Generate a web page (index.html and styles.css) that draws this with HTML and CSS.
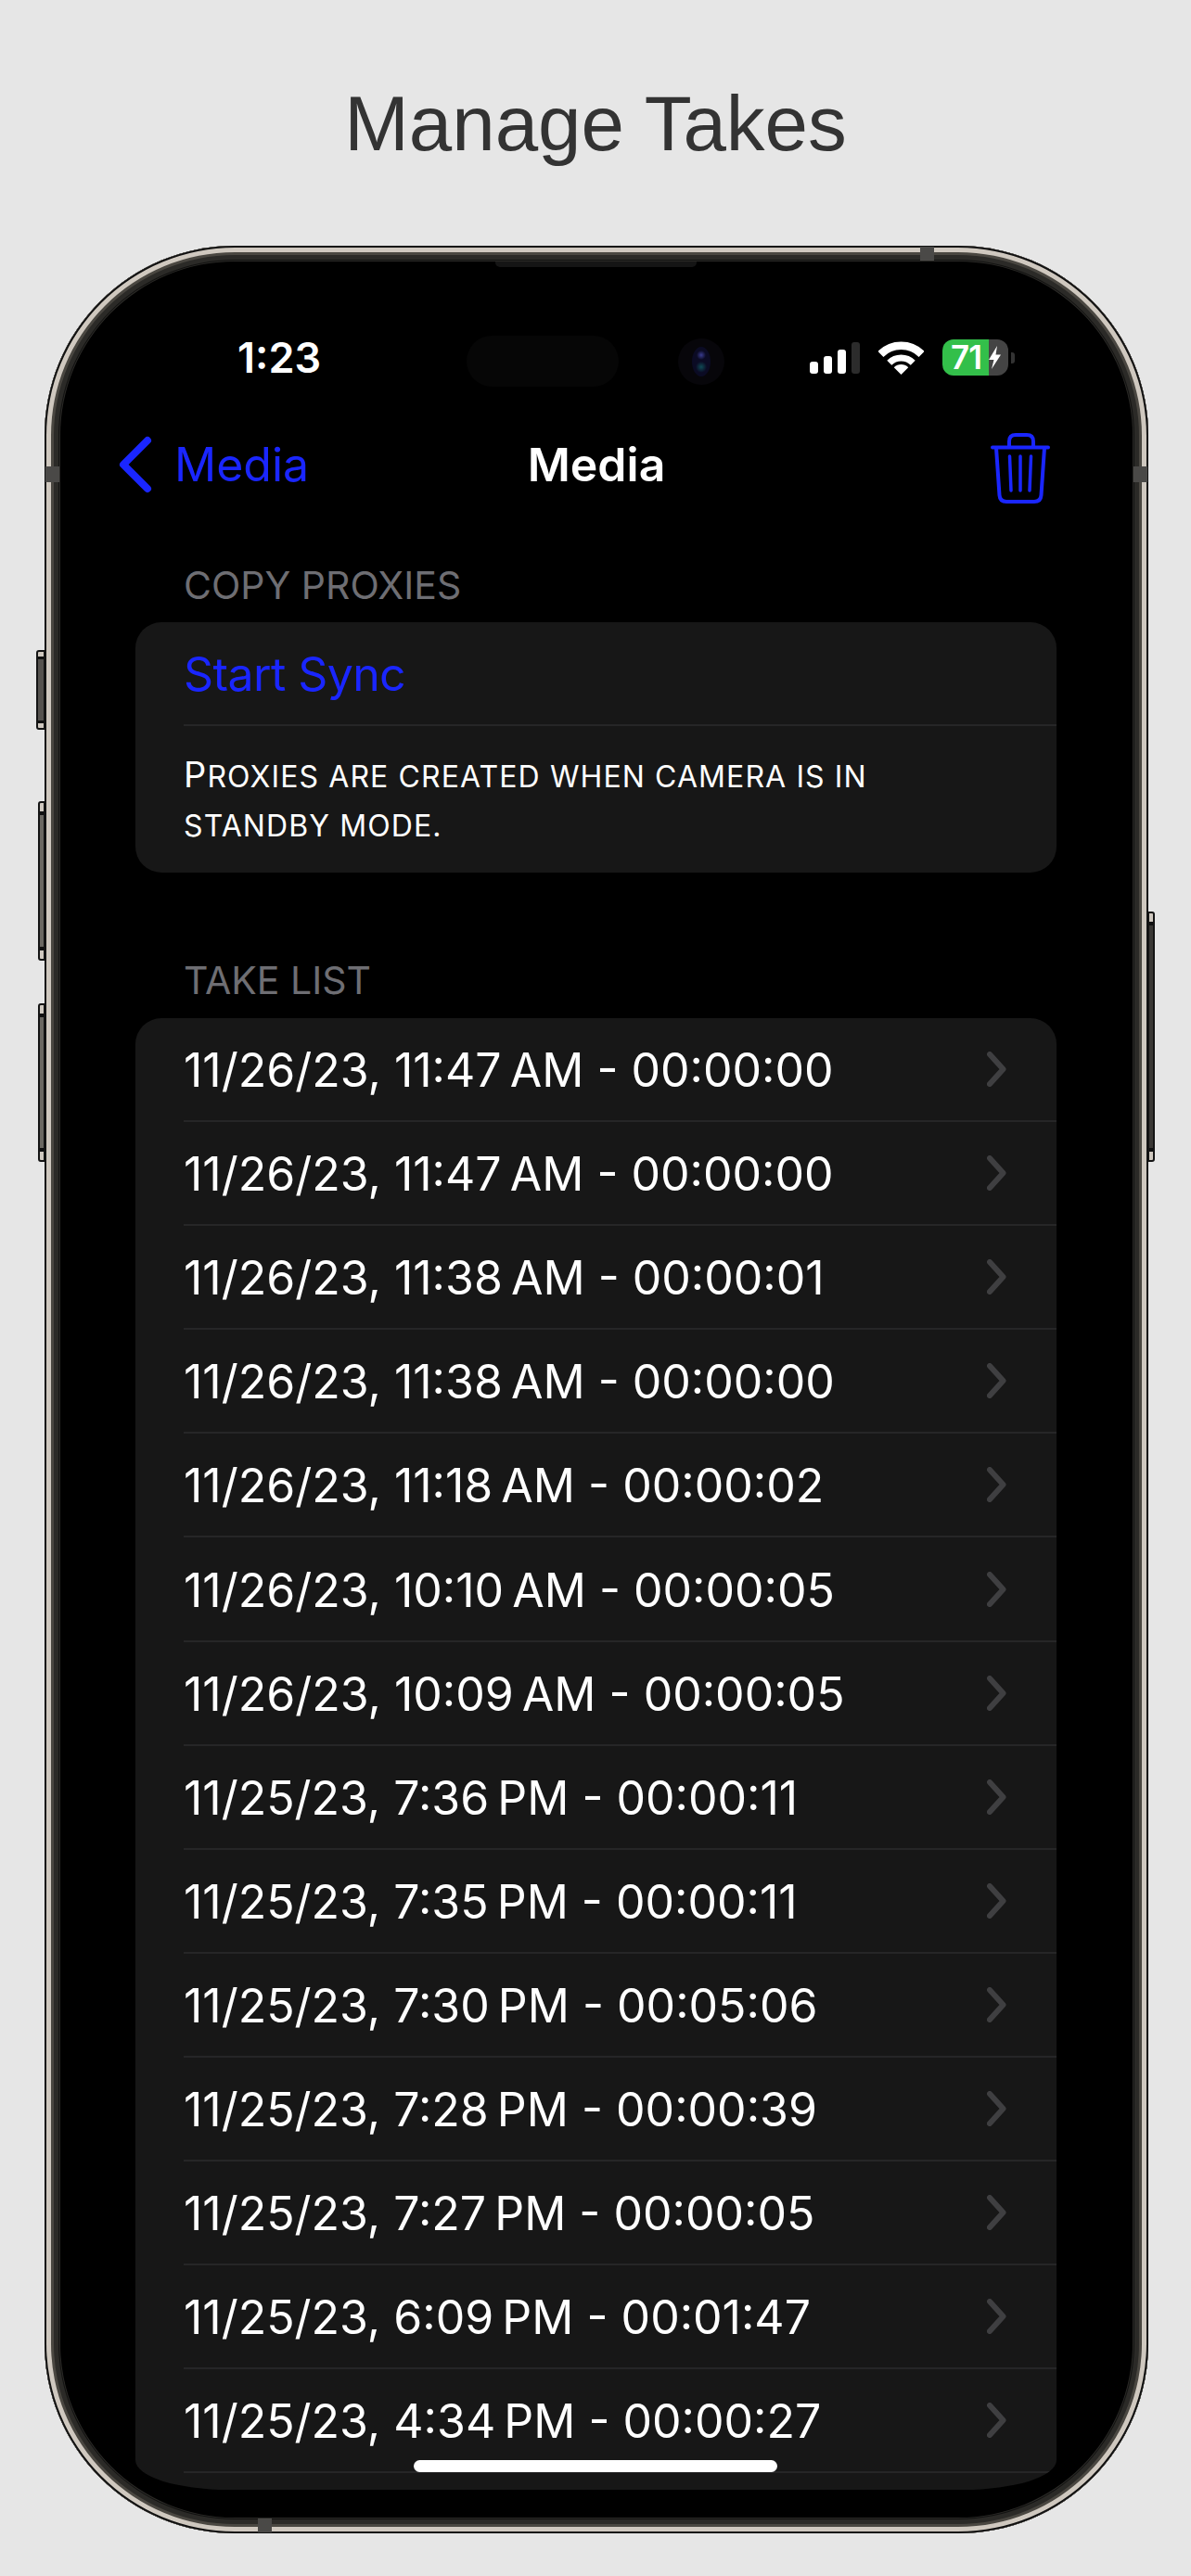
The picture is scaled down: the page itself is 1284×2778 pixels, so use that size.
FILE: index.html
```html
<!DOCTYPE html>
<html>
<head>
<meta charset="utf-8">
<title>Manage Takes</title>
<link rel="stylesheet" href="styles.css">
</head>
<body>
<h1 class="page-title">Manage Takes</h1>

<div class="phone">
	<span class="btn btn-action"></span>
	<span class="btn btn-vol-up"></span>
	<span class="btn btn-vol-down"></span>
	<span class="btn btn-power"></span>
	<span class="seam seam-top"></span>
	<span class="seam seam-bottom"></span>
	<span class="seam seam-left"></span>
	<span class="seam seam-right"></span>

	<div class="screen">
		<span class="speaker"></span>

		<div class="status">
			<div class="status-time">1:23</div>
			<div class="island">
				<div class="island-pill"></div>
				<div class="island-cam"><span></span></div>
			</div>
			<div class="status-icons">
				<div class="signal">
					<span class="bar bar-1"></span>
					<span class="bar bar-2"></span>
					<span class="bar bar-3"></span>
					<span class="bar bar-4"></span>
				</div>
				<svg class="wifi" width="49" height="36" viewBox="0 0 49 36">
					<path d="M2.4 13.9A31.25 31.25 0 0 1 46.6 13.9" fill="none" stroke="#fff" stroke-width="8.5"/>
					<path d="M11.77 23.27A18 18 0 0 1 37.23 23.27" fill="none" stroke="#fff" stroke-width="7"/>
					<path d="M24.5 36L16.72 28.22A11 11 0 0 1 32.28 28.22Z" fill="#fff"/>
				</svg>
				<div class="battery">
					<span class="battery-num">71</span>
					<svg class="bolt" width="13" height="25" viewBox="0 0 13 25">
						<path d="M9 0L0 15H5.500L3 25L13 9.500H7.500Z" fill="#fff"/>
					</svg>
				</div>
				<span class="battery-nub"></span>
			</div>
		</div>

		<div class="nav">
			<div class="nav-back">
				<svg width="36" height="62" viewBox="0 0 36 62">
					<path d="M31 5L5 31L31 57" fill="none" stroke="#1a26ff" stroke-width="8" stroke-linecap="round" stroke-linejoin="round"/>
				</svg>
				<span>Media</span>
			</div>
			<div class="nav-title">Media</div>
			<svg class="nav-trash" width="64" height="76" viewBox="0 0 64 76" fill="none" stroke="#1a26ff" stroke-linecap="round" stroke-linejoin="round">
				<path d="M2 15.5H62" stroke-width="4"/>
				<path d="M20 15V9Q20 2 27 2H39Q46 2 46 9V15" stroke-width="4"/>
				<path d="M6 16L9.500 67Q10 74 17 74H47Q54 74 54.500 67L58 16" stroke-width="4"/>
				<path d="M20.500 25L22 62M32 25V62M43.500 25L42 62" stroke-width="3.500"/>
			</svg>
		</div>

		<div class="section-label label-first">COPY PROXIES</div>
		<div class="card">
			<div class="sync-row"><span>Start Sync</span></div>
			<div class="note">Proxies are created when camera is in standby mode.</div>
		</div>

		<div class="section-label label-second">TAKE LIST</div>
		<ul class="takes">
			<li><div class="take"><span>11/26/23, 11:47&#8239;AM - 00:00:00</span><svg class="chev" width="21" height="38" viewBox="0 0 21 38"><path d="M3 3L17.500 19L3 35"/></svg></div></li>
			<li><div class="take"><span>11/26/23, 11:47&#8239;AM - 00:00:00</span><svg class="chev" width="21" height="38" viewBox="0 0 21 38"><path d="M3 3L17.500 19L3 35"/></svg></div></li>
			<li><div class="take"><span>11/26/23, 11:38&#8239;AM - 00:00:01</span><svg class="chev" width="21" height="38" viewBox="0 0 21 38"><path d="M3 3L17.500 19L3 35"/></svg></div></li>
			<li><div class="take"><span>11/26/23, 11:38&#8239;AM - 00:00:00</span><svg class="chev" width="21" height="38" viewBox="0 0 21 38"><path d="M3 3L17.500 19L3 35"/></svg></div></li>
			<li><div class="take"><span>11/26/23, 11:18&#8239;AM - 00:00:02</span><svg class="chev" width="21" height="38" viewBox="0 0 21 38"><path d="M3 3L17.500 19L3 35"/></svg></div></li>
			<li><div class="take"><span>11/26/23, 10:10&#8239;AM - 00:00:05</span><svg class="chev" width="21" height="38" viewBox="0 0 21 38"><path d="M3 3L17.500 19L3 35"/></svg></div></li>
			<li><div class="take"><span>11/26/23, 10:09&#8239;AM - 00:00:05</span><svg class="chev" width="21" height="38" viewBox="0 0 21 38"><path d="M3 3L17.500 19L3 35"/></svg></div></li>
			<li><div class="take"><span>11/25/23, 7:36&#8239;PM - 00:00:11</span><svg class="chev" width="21" height="38" viewBox="0 0 21 38"><path d="M3 3L17.500 19L3 35"/></svg></div></li>
			<li><div class="take"><span>11/25/23, 7:35&#8239;PM - 00:00:11</span><svg class="chev" width="21" height="38" viewBox="0 0 21 38"><path d="M3 3L17.500 19L3 35"/></svg></div></li>
			<li><div class="take"><span>11/25/23, 7:30&#8239;PM - 00:05:06</span><svg class="chev" width="21" height="38" viewBox="0 0 21 38"><path d="M3 3L17.500 19L3 35"/></svg></div></li>
			<li><div class="take"><span>11/25/23, 7:28&#8239;PM - 00:00:39</span><svg class="chev" width="21" height="38" viewBox="0 0 21 38"><path d="M3 3L17.500 19L3 35"/></svg></div></li>
			<li><div class="take"><span>11/25/23, 7:27&#8239;PM - 00:00:05</span><svg class="chev" width="21" height="38" viewBox="0 0 21 38"><path d="M3 3L17.500 19L3 35"/></svg></div></li>
			<li><div class="take"><span>11/25/23, 6:09&#8239;PM - 00:01:47</span><svg class="chev" width="21" height="38" viewBox="0 0 21 38"><path d="M3 3L17.500 19L3 35"/></svg></div></li>
			<li><div class="take"><span>11/25/23, 4:34&#8239;PM - 00:00:27</span><svg class="chev" width="21" height="38" viewBox="0 0 21 38"><path d="M3 3L17.500 19L3 35"/></svg></div></li>
		</ul>

		<div class="home-bar"></div>
	</div>
</div>
</body>
</html>
```

FILE: styles.css
```css
* {
	box-sizing: border-box;
}

html, body, h1, ul, li {
	margin: 0;
	padding: 0;
}

body {
	width: 1284px;
	height: 2778px;
	overflow: hidden;
	background: #e6e6e6;
	font-family: Inter, "Noto Sans", sans-serif;
}

.page-title {
	height: 265px;
	padding-top: 83px;
	color: #333;
	font: 400 83.5px/100px "Liberation Sans", sans-serif;
	text-align: center;
}

/* phone body */
.phone {
	position: relative;
	width: 1190px;
	height: 2467px;
	margin-left: 48px;
	padding: 17px;
	border-radius: 205px;
	background: #2b2a27;
	box-shadow:
		inset 0 0 0 2px #111,
		inset 0 0 0 7px #cfc8bf,
		inset 0 0 0 10px #4a4741,
		inset 0 0 0 15px #2b2a27,
		inset 0 0 0 16px #121211;
}

.btn {
	position: absolute;
	border: 2px solid #141414;
	background: linear-gradient(180deg, #cfc8bf 0, #cfc8bf 9px, #111 9px, #111 13px, #6b6862 13px, #6b6862 calc(100% - 13px), #111 calc(100% - 13px), #111 calc(100% - 9px), #cfc8bf calc(100% - 9px));
}
.btn-action {
	left: -9px;
	top: 436px;
	width: 10px;
	height: 86px;
	background: linear-gradient(180deg, #cfc8bf 0, #cfc8bf 5px, #111 5px, #111 8px, #55524e 8px, #55524e calc(100% - 8px), #111 calc(100% - 8px), #111 calc(100% - 5px), #cfc8bf calc(100% - 5px));
	border-radius: 3px 0 0 3px;
}
.btn-vol-up {
	left: -7px;
	top: 599px;
	width: 8px;
	height: 172px;
	border-radius: 3px 0 0 3px;
}
.btn-vol-down {
	left: -7px;
	top: 817px;
	width: 8px;
	height: 171px;
	border-radius: 3px 0 0 3px;
}
.btn-power {
	right: -7px;
	top: 718px;
	width: 8px;
	height: 270px;
	background: linear-gradient(180deg, #cfc8bf 0, #cfc8bf 9px, #111 9px, #111 13px, #3a3835 13px, #3a3835 calc(100% - 13px), #111 calc(100% - 13px), #111 calc(100% - 9px), #cfc8bf calc(100% - 9px));
	border-radius: 0 3px 3px 0;
}

.seam {
	position: absolute;
	background: #4a4947;
}
.seam-top {
	top: 1px;
	left: 944px;
	width: 15px;
	height: 15px;
}
.seam-bottom {
	bottom: 1px;
	left: 230px;
	width: 15px;
	height: 15px;
}
.seam-left {
	left: 1px;
	top: 238px;
	width: 15px;
	height: 17px;
}
.seam-right {
	right: 1px;
	top: 238px;
	width: 15px;
	height: 17px;
}

.screen {
	position: relative;
	height: 2433px;
	border-radius: 188px;
	background: #000;
	overflow: hidden;
}

.speaker {
	position: absolute;
	top: 0;
	left: 469px;
	width: 217px;
	height: 6px;
	border-radius: 0 0 5px 5px;
	background: #151515;
}

/* status bar */
.status {
	display: flex;
	align-items: center;
	height: 55px;
	margin-top: 80px;
	color: #fff;
}
.status-time {
	width: 438px;
	margin-bottom: 7px;
	padding-left: 191px;
	font-size: 45px;
	font-weight: 600;
	line-height: 50px;
}
.island {
	display: flex;
	align-items: center;
	gap: 64px;
	width: 404px;
}
.island-pill {
	width: 164px;
	height: 55px;
	border-radius: 28px;
	background: #060606;
}
.island-cam {
	display: flex;
	align-items: center;
	justify-content: center;
	width: 50px;
	height: 50px;
	border-radius: 50%;
	background: #07060a;
}
.island-cam span {
	width: 20px;
	height: 32px;
	border-radius: 50%;
	background:
		radial-gradient(circle at 50% 28%, #3a3c90 0, transparent 5px),
		radial-gradient(circle at 50% 68%, #0f4a55 0, transparent 6px),
		#0b0b24;
}
.status-icons {
	display: flex;
	align-items: center;
	margin-left: -34px;
	margin-bottom: 8px;
}
.signal {
	display: flex;
	align-items: flex-end;
	gap: 6px;
	height: 34px;
}
.bar {
	width: 9px;
	border-radius: 3px;
	background: #fff;
}
.bar-1 { height: 13px; }
.bar-2 { height: 19px; }
.bar-3 { height: 26px; }
.bar-4 { height: 34px; background: #2c2c2c; }
.wifi {
	margin-left: 20px;
}
.battery {
	display: flex;
	align-items: center;
	width: 71px;
	height: 39px;
	margin-left: 20px;
	padding-left: 9px;
	border-radius: 12px;
	background: linear-gradient(90deg, #33bf4a 70%, #444 70%);
	font-size: 35px;
	font-weight: 600;
	letter-spacing: -1px;
	line-height: 39px;
}
.battery-num {
	width: 41px;
}
.battery-nub {
	width: 4px;
	height: 12px;
	margin-left: 3px;
	border-radius: 0 3px 3px 0;
	background: #333;
}

/* nav bar */
.nav {
	position: relative;
	display: flex;
	align-items: center;
	justify-content: space-between;
	height: 76px;
	margin-top: 46px;
	padding: 0 89px 0 63px;
}
.nav-back {
	display: flex;
	align-items: center;
	gap: 24px;
	color: #1a26ff;
	font-size: 50px;
}
.nav-title {
	position: absolute;
	left: 0;
	right: 0;
	color: #fff;
	font-size: 50px;
	font-weight: 600;
	text-align: center;
}
.nav-trash {
	margin-top: 8px;
}

/* sections */
.section-label {
	height: 40px;
	padding-left: 133px;
	color: #6e6e73;
	font-size: 41px;
	line-height: 40px;
}
.label-first {
	margin-top: 72px;
}
.label-second {
	margin-top: 96px;
}

.card, .takes {
	width: 993px;
	margin: 20px 0 0 81px;
	background: #171717;
}
.card {
	height: 270px;
	padding-left: 52px;
	border-radius: 28px;
}
.sync-row {
	height: 112px;
	border-bottom: 2px solid #262627;
	color: #1a26ff;
	font-size: 50px;
	letter-spacing: -0.6px;
	line-height: 112px;
}
.note {
	width: 780px;
	padding-top: 26px;
	color: #fff;
	font-size: 32px;
	letter-spacing: 1.1px;
	line-height: 53px;
	text-transform: uppercase;
}
.note::first-letter {
	font-size: 38px;
}

.takes {
	margin-top: 21px;
	padding-bottom: 18px;
	border-radius: 28px 28px 100px 100px / 28px 28px 32px 32px;
	list-style: none;
	overflow: hidden;
}
.takes li {
	padding-left: 52px;
}
.take {
	display: flex;
	align-items: center;
	justify-content: space-between;
	height: 112.1px;
	padding-right: 54px;
	border-bottom: 2px solid #262627;
	color: #fff;
	font-size: 50px;
}
.take span {
	padding-top: 2px;
}
.chev path {
	fill: none;
	stroke: #3f3f41;
	stroke-width: 6;
	stroke-linecap: round;
	stroke-linejoin: round;
}

.home-bar {
	position: absolute;
	left: 381px;
	bottom: 49px;
	width: 392px;
	height: 13px;
	border-radius: 7px;
	background: #fff;
}
```
